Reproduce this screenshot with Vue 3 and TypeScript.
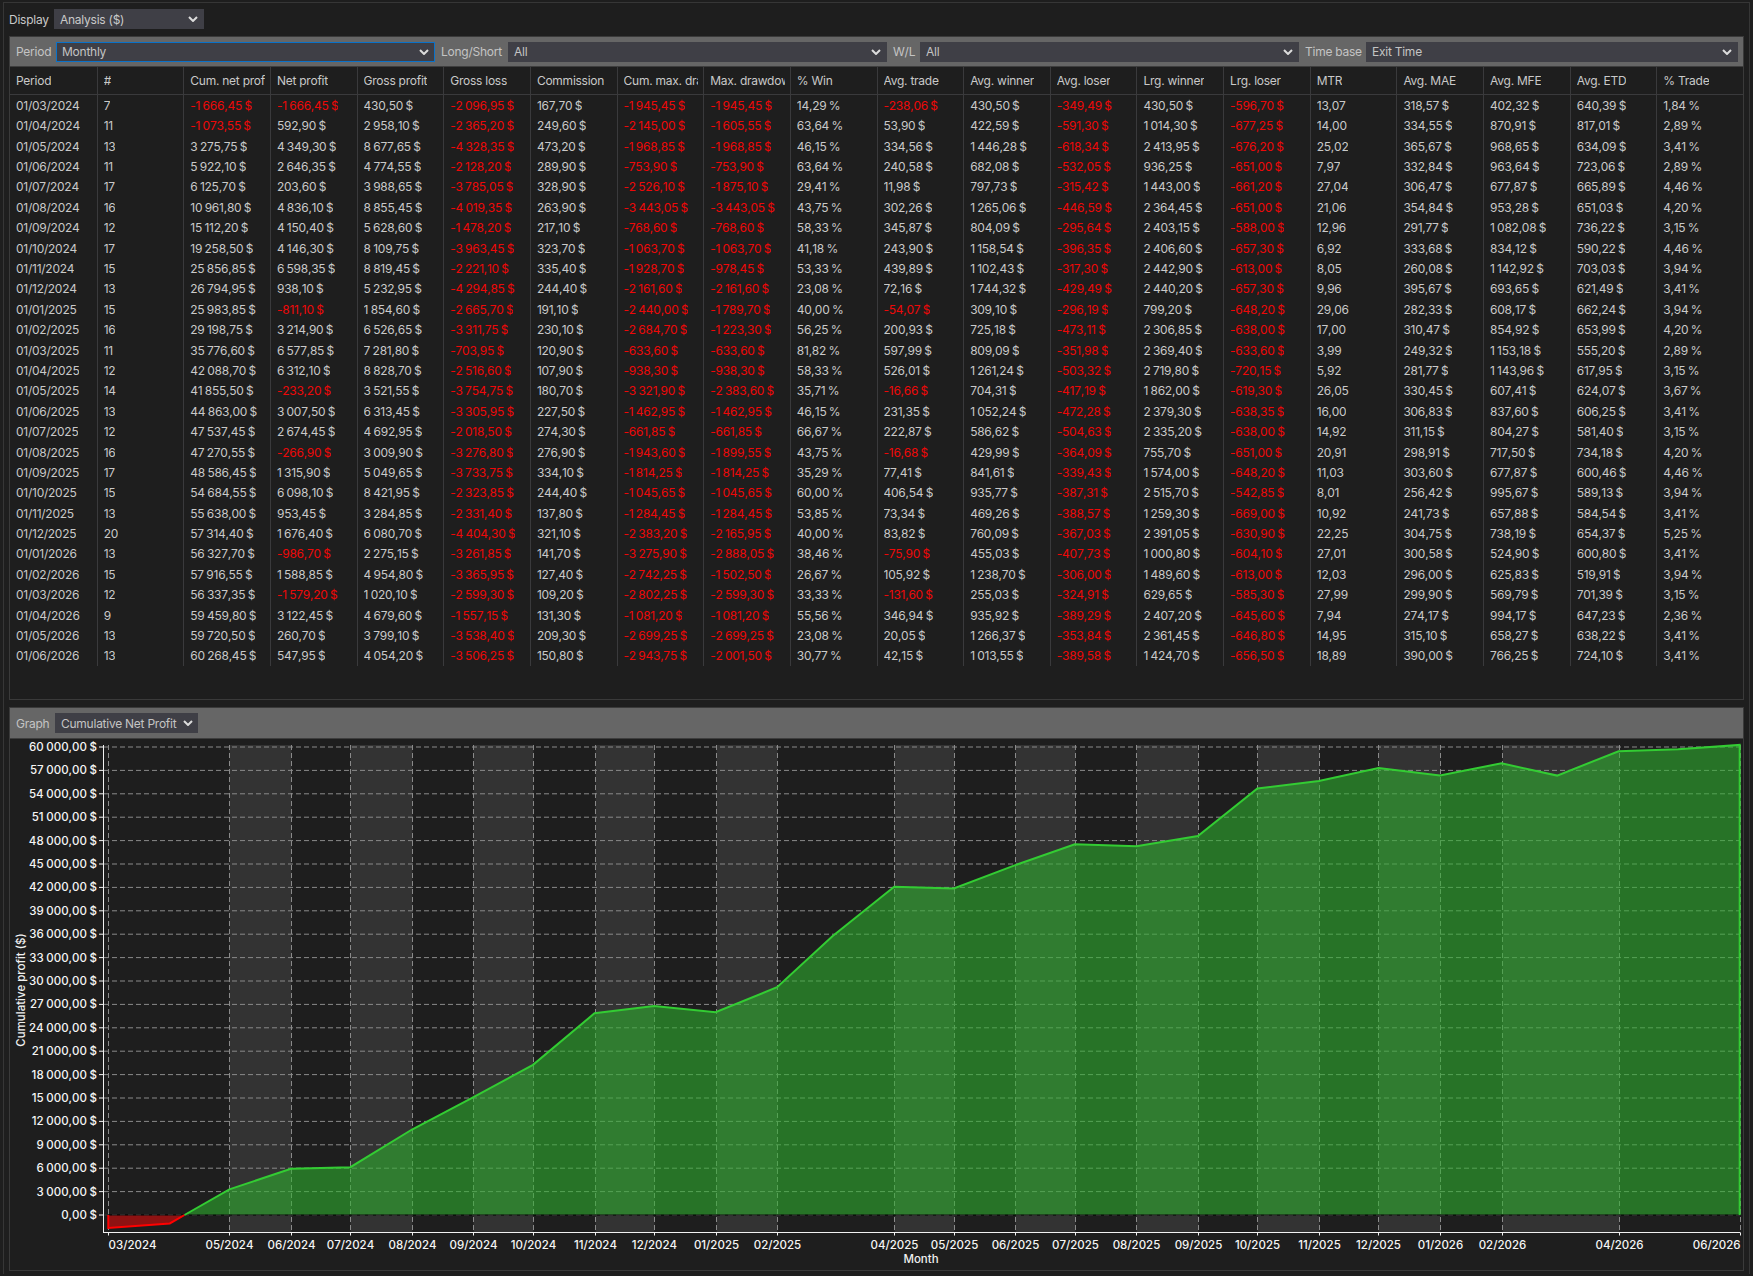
<template>
  <div class="frame">
    <div class="display-row">
      <span class="lbl">Display</span>
      <div class="sel sel-display"><span>Analysis ($)</span><svg class="chev" viewBox="0 0 10 6"><path d="M1 1l4 4 4-4" /></svg></div>
    </div>

    <div class="panel table-panel">
      <div class="bar filters">
        <span class="lbl">Period</span>
        <div class="sel sel-focus"><span>Monthly</span><svg class="chev" viewBox="0 0 10 6"><path d="M1 1l4 4 4-4" /></svg></div>
        <span class="lbl">Long/Short</span>
        <div class="sel"><span>All</span><svg class="chev" viewBox="0 0 10 6"><path d="M1 1l4 4 4-4" /></svg></div>
        <span class="lbl">W/L</span>
        <div class="sel"><span>All</span><svg class="chev" viewBox="0 0 10 6"><path d="M1 1l4 4 4-4" /></svg></div>
        <span class="lbl">Time base</span>
        <div class="sel"><span>Exit Time</span><svg class="chev" viewBox="0 0 10 6"><path d="M1 1l4 4 4-4" /></svg></div>
      </div>

      <div class="grid-row head">
        <div v-for="h in headers" :key="h" class="cell"><span>{{ h }}</span></div>
      </div>
      <div v-for="(r, i) in rows" :key="i" class="grid-row">
        <div v-for="(c, j) in r" :key="j" class="cell" :class="{ neg: c.startsWith('-') }"><span>{{ c }}</span></div>
      </div>
    </div>

    <div class="panel graph-panel">
      <div class="bar graph-bar">
        <span class="lbl">Graph</span>
        <div class="sel sel-graph"><span>Cumulative Net Profit</span><svg class="chev" viewBox="0 0 10 6"><path d="M1 1l4 4 4-4" /></svg></div>
      </div>
      <svg class="chart" viewBox="10 739 1733 531" width="1733" height="531">
        <!-- bandes alternées -->
        <rect v-for="b in bands" :key="b.x" :x="b.x" y="745" :width="b.w" :height="axisY - 745" fill="#333333" />
        <!-- grille -->
        <line v-for="t in yTicks" :key="'h' + t.v" x1="104" :y1="t.y" :x2="plotR" :y2="t.y" class="grid" />
        <line v-for="t in xTicks" :key="'v' + t.label" :x1="t.x" y1="745" :x2="t.x" :y2="axisY" class="grid" />
        <!-- courbe -->
        <path :d="redArea" fill="rgba(235,10,10,0.55)" />
        <path :d="greenArea" fill="rgba(46,179,46,0.57)" />
        <line x1="104" :y1="zeroY" :x2="plotR" :y2="zeroY" stroke="#000" stroke-width="1" />
        <polyline :points="redLine" fill="none" stroke="#ff0000" stroke-width="2" />
        <polyline :points="greenLine" fill="none" stroke="#33cc33" stroke-width="2" />
        <!-- axes -->
        <line x1="103.5" y1="745" x2="103.5" :y2="axisY + 0.5" class="axis" />
        <line x1="103" :y1="axisY" :x2="plotR + 0.5" :y2="axisY" class="axis" />
        <line v-for="t in yTicks" :key="'yt' + t.v" x1="99" :y1="t.y" x2="103" :y2="t.y" class="axis" />
        <line v-for="t in xTicks" :key="'xt' + t.label" :x1="t.x" :y1="axisY" :x2="t.x" :y2="axisY + 3" class="axis" />
        <text v-for="t in yTicks" :key="'yl' + t.v" x="97" :y="t.y + 4" text-anchor="end" class="tick">{{ t.label }}</text>
        <text v-for="t in xTicks" :key="'xl' + t.label" :x="t.x" y="1248.5" :text-anchor="t.anchor" class="tick">{{ t.label }}</text>
        <text x="921" y="1263" text-anchor="middle" class="title">Month</text>
        <text transform="translate(25 990) rotate(-90)" text-anchor="middle" class="title">Cumulative profit ($)</text>
      </svg>
    </div>
  </div>
</template>

<script setup lang="ts">
const headers = ['Period', '#', 'Cum. net profit', 'Net profit', 'Gross profit', 'Gross loss', 'Commission', 'Cum. max. drawdown', 'Max. drawdown', '% Win', 'Avg. trade', 'Avg. winner', 'Avg. loser', 'Lrg. winner', 'Lrg. loser', 'MTR', 'Avg. MAE', 'Avg. MFE', 'Avg. ETD', '% Trade']

const raw = `01/03/2024|7|-1 666,45 $|-1 666,45 $|430,50 $|-2 096,95 $|167,70 $|-1 945,45 $|-1 945,45 $|14,29 %|-238,06 $|430,50 $|-349,49 $|430,50 $|-596,70 $|13,07|318,57 $|402,32 $|640,39 $|1,84 %
01/04/2024|11|-1 073,55 $|592,90 $|2 958,10 $|-2 365,20 $|249,60 $|-2 145,00 $|-1 605,55 $|63,64 %|53,90 $|422,59 $|-591,30 $|1 014,30 $|-677,25 $|14,00|334,55 $|870,91 $|817,01 $|2,89 %
01/05/2024|13|3 275,75 $|4 349,30 $|8 677,65 $|-4 328,35 $|473,20 $|-1 968,85 $|-1 968,85 $|46,15 %|334,56 $|1 446,28 $|-618,34 $|2 413,95 $|-676,20 $|25,02|365,67 $|968,65 $|634,09 $|3,41 %
01/06/2024|11|5 922,10 $|2 646,35 $|4 774,55 $|-2 128,20 $|289,90 $|-753,90 $|-753,90 $|63,64 %|240,58 $|682,08 $|-532,05 $|936,25 $|-651,00 $|7,97|332,84 $|963,64 $|723,06 $|2,89 %
01/07/2024|17|6 125,70 $|203,60 $|3 988,65 $|-3 785,05 $|328,90 $|-2 526,10 $|-1 875,10 $|29,41 %|11,98 $|797,73 $|-315,42 $|1 443,00 $|-661,20 $|27,04|306,47 $|677,87 $|665,89 $|4,46 %
01/08/2024|16|10 961,80 $|4 836,10 $|8 855,45 $|-4 019,35 $|263,90 $|-3 443,05 $|-3 443,05 $|43,75 %|302,26 $|1 265,06 $|-446,59 $|2 364,45 $|-651,00 $|21,06|354,84 $|953,28 $|651,03 $|4,20 %
01/09/2024|12|15 112,20 $|4 150,40 $|5 628,60 $|-1 478,20 $|217,10 $|-768,60 $|-768,60 $|58,33 %|345,87 $|804,09 $|-295,64 $|2 403,15 $|-588,00 $|12,96|291,77 $|1 082,08 $|736,22 $|3,15 %
01/10/2024|17|19 258,50 $|4 146,30 $|8 109,75 $|-3 963,45 $|323,70 $|-1 063,70 $|-1 063,70 $|41,18 %|243,90 $|1 158,54 $|-396,35 $|2 406,60 $|-657,30 $|6,92|333,68 $|834,12 $|590,22 $|4,46 %
01/11/2024|15|25 856,85 $|6 598,35 $|8 819,45 $|-2 221,10 $|335,40 $|-1 928,70 $|-978,45 $|53,33 %|439,89 $|1 102,43 $|-317,30 $|2 442,90 $|-613,00 $|8,05|260,08 $|1 142,92 $|703,03 $|3,94 %
01/12/2024|13|26 794,95 $|938,10 $|5 232,95 $|-4 294,85 $|244,40 $|-2 161,60 $|-2 161,60 $|23,08 %|72,16 $|1 744,32 $|-429,49 $|2 440,20 $|-657,30 $|9,96|395,67 $|693,65 $|621,49 $|3,41 %
01/01/2025|15|25 983,85 $|-811,10 $|1 854,60 $|-2 665,70 $|191,10 $|-2 440,00 $|-1 789,70 $|40,00 %|-54,07 $|309,10 $|-296,19 $|799,20 $|-648,20 $|29,06|282,33 $|608,17 $|662,24 $|3,94 %
01/02/2025|16|29 198,75 $|3 214,90 $|6 526,65 $|-3 311,75 $|230,10 $|-2 684,70 $|-1 223,30 $|56,25 %|200,93 $|725,18 $|-473,11 $|2 306,85 $|-638,00 $|17,00|310,47 $|854,92 $|653,99 $|4,20 %
01/03/2025|11|35 776,60 $|6 577,85 $|7 281,80 $|-703,95 $|120,90 $|-633,60 $|-633,60 $|81,82 %|597,99 $|809,09 $|-351,98 $|2 369,40 $|-633,60 $|3,99|249,32 $|1 153,18 $|555,20 $|2,89 %
01/04/2025|12|42 088,70 $|6 312,10 $|8 828,70 $|-2 516,60 $|107,90 $|-938,30 $|-938,30 $|58,33 %|526,01 $|1 261,24 $|-503,32 $|2 719,80 $|-720,15 $|5,92|281,77 $|1 143,96 $|617,95 $|3,15 %
01/05/2025|14|41 855,50 $|-233,20 $|3 521,55 $|-3 754,75 $|180,70 $|-3 321,90 $|-2 383,60 $|35,71 %|-16,66 $|704,31 $|-417,19 $|1 862,00 $|-619,30 $|26,05|330,45 $|607,41 $|624,07 $|3,67 %
01/06/2025|13|44 863,00 $|3 007,50 $|6 313,45 $|-3 305,95 $|227,50 $|-1 462,95 $|-1 462,95 $|46,15 %|231,35 $|1 052,24 $|-472,28 $|2 379,30 $|-638,35 $|16,00|306,83 $|837,60 $|606,25 $|3,41 %
01/07/2025|12|47 537,45 $|2 674,45 $|4 692,95 $|-2 018,50 $|274,30 $|-661,85 $|-661,85 $|66,67 %|222,87 $|586,62 $|-504,63 $|2 335,20 $|-638,00 $|14,92|311,15 $|804,27 $|581,40 $|3,15 %
01/08/2025|16|47 270,55 $|-266,90 $|3 009,90 $|-3 276,80 $|276,90 $|-1 943,60 $|-1 899,55 $|43,75 %|-16,68 $|429,99 $|-364,09 $|755,70 $|-651,00 $|20,91|298,91 $|717,50 $|734,18 $|4,20 %
01/09/2025|17|48 586,45 $|1 315,90 $|5 049,65 $|-3 733,75 $|334,10 $|-1 814,25 $|-1 814,25 $|35,29 %|77,41 $|841,61 $|-339,43 $|1 574,00 $|-648,20 $|11,03|303,60 $|677,87 $|600,46 $|4,46 %
01/10/2025|15|54 684,55 $|6 098,10 $|8 421,95 $|-2 323,85 $|244,40 $|-1 045,65 $|-1 045,65 $|60,00 %|406,54 $|935,77 $|-387,31 $|2 515,70 $|-542,85 $|8,01|256,42 $|995,67 $|589,13 $|3,94 %
01/11/2025|13|55 638,00 $|953,45 $|3 284,85 $|-2 331,40 $|137,80 $|-1 284,45 $|-1 284,45 $|53,85 %|73,34 $|469,26 $|-388,57 $|1 259,30 $|-669,00 $|10,92|241,73 $|657,88 $|584,54 $|3,41 %
01/12/2025|20|57 314,40 $|1 676,40 $|6 080,70 $|-4 404,30 $|321,10 $|-2 383,20 $|-2 165,95 $|40,00 %|83,82 $|760,09 $|-367,03 $|2 391,05 $|-630,90 $|22,25|304,75 $|738,19 $|654,37 $|5,25 %
01/01/2026|13|56 327,70 $|-986,70 $|2 275,15 $|-3 261,85 $|141,70 $|-3 275,90 $|-2 888,05 $|38,46 %|-75,90 $|455,03 $|-407,73 $|1 000,80 $|-604,10 $|27,01|300,58 $|524,90 $|600,80 $|3,41 %
01/02/2026|15|57 916,55 $|1 588,85 $|4 954,80 $|-3 365,95 $|127,40 $|-2 742,25 $|-1 502,50 $|26,67 %|105,92 $|1 238,70 $|-306,00 $|1 489,60 $|-613,00 $|12,03|296,00 $|625,83 $|519,91 $|3,94 %
01/03/2026|12|56 337,35 $|-1 579,20 $|1 020,10 $|-2 599,30 $|109,20 $|-2 802,25 $|-2 599,30 $|33,33 %|-131,60 $|255,03 $|-324,91 $|629,65 $|-585,30 $|27,99|299,90 $|569,79 $|701,39 $|3,15 %
01/04/2026|9|59 459,80 $|3 122,45 $|4 679,60 $|-1 557,15 $|131,30 $|-1 081,20 $|-1 081,20 $|55,56 %|346,94 $|935,92 $|-389,29 $|2 407,20 $|-645,60 $|7,94|274,17 $|994,17 $|647,23 $|2,36 %
01/05/2026|13|59 720,50 $|260,70 $|3 799,10 $|-3 538,40 $|209,30 $|-2 699,25 $|-2 699,25 $|23,08 %|20,05 $|1 266,37 $|-353,84 $|2 361,45 $|-646,80 $|14,95|315,10 $|658,27 $|638,22 $|3,41 %
01/06/2026|13|60 268,45 $|547,95 $|4 054,20 $|-3 506,25 $|150,80 $|-2 943,75 $|-2 001,50 $|30,77 %|42,15 $|1 013,55 $|-389,58 $|1 424,70 $|-656,50 $|18,89|390,00 $|766,25 $|724,10 $|3,41 %`

const rows = raw.split('\n').map(l => l.split('|'))

const plotL = 108.3
const plotR = 1739.7
const zeroY = 1215
const axisY = 1232.5
const yStep = 23.4

function dayOf(m: number, y: number) {
  return Date.UTC(y, m - 1, 1) / 86400000
}
const day0 = dayOf(3, 2024)
const dayScale = (plotR - plotL) / (dayOf(6, 2026) - day0)
const xOf = (m: number, y: number) => plotL + (dayOf(m, y) - day0) * dayScale
const yOf = (v: number) => zeroY - (v / 3000) * yStep

// points de la courbe, tirés de la colonne Cum. net profit
const pts = rows.map(r => {
  const [, m, y] = r[0].split('/').map(Number)
  const v = parseFloat(r[2].replace(' ', '').replace(',', '.'))
  return { x: xOf(m, y), y: yOf(v), v }
})

const crossT = -pts[1].v / (pts[2].v - pts[1].v)
const crossX = pts[1].x + (pts[2].x - pts[1].x) * crossT
const fmt = (a: { x: number; y: number }) => `${a.x.toFixed(1)},${a.y.toFixed(1)}`

const redLine = `${plotL},${zeroY} ${fmt(pts[0])} ${fmt(pts[1])} ${crossX.toFixed(1)},${zeroY}`
const redArea = `M ${plotL},${zeroY} L ${fmt(pts[0])} L ${fmt(pts[1])} L ${crossX.toFixed(1)},${zeroY} Z`
const greenPts = pts.slice(2).map(fmt).join(' ')
const greenLine = `${crossX.toFixed(1)},${zeroY} ${greenPts} ${plotR},${zeroY}`
const greenArea = `M ${crossX.toFixed(1)},${zeroY} L ${greenPts} L ${plotR},${zeroY} Z`

const yTicks = Array.from({ length: 21 }, (_, i) => {
  const v = i * 3000
  const s = v.toString().replace(/\B(?=(\d{3})+$)/g, ' ')
  return { v, y: zeroY - i * yStep, label: `${s},00 $` }
})

// mois affichés sur l'axe (03/2025, 03/2026 etc. sont sautés comme dans l'original)
const tickMonths: [number, number][] = [
  [3, 2024], [5, 2024], [6, 2024], [7, 2024], [8, 2024], [9, 2024], [10, 2024], [11, 2024], [12, 2024],
  [1, 2025], [2, 2025], [4, 2025], [5, 2025], [6, 2025], [7, 2025], [8, 2025], [9, 2025], [10, 2025], [11, 2025], [12, 2025],
  [1, 2026], [2, 2026], [4, 2026], [6, 2026],
]
const xTicks = tickMonths.map(([m, y], i) => ({
  x: Math.round(xOf(m, y)) + 0.5,
  label: `${String(m).padStart(2, '0')}/${y}`,
  anchor: i === 0 ? 'start' : i === tickMonths.length - 1 ? 'end' : 'middle',
}))

const bands: { x: number; w: number }[] = []
for (let i = 1; i < xTicks.length - 1; i += 2) {
  bands.push({ x: xTicks[i].x, w: xTicks[i + 1].x - xTicks[i].x })
}
</script>

<style scoped>
.frame { box-sizing: border-box; width: 1747px; height: 1272px; margin-left: 3px; border: 1px solid #363636; border-bottom: 0; padding: 6px 5px 0 5px; color: #c9c9c9; font-family: Inter, "Liberation Sans", sans-serif; font-size: 12px; letter-spacing: -0.25px; }
.display-row { display: flex; align-items: center; gap: 6px; height: 20px; margin-bottom: 7px; }
.display-row .lbl { width: 39px; }
.lbl { white-space: nowrap; }
.sel { box-sizing: border-box; height: 20px; background: #3f3f46; display: flex; align-items: center; justify-content: space-between; padding: 0 6px; }
.sel-display { width: 150px; }
.sel-focus { border: 1px solid #0a72c9; padding: 0 5px; }
.sel-graph { width: 143px; padding-right: 5px; }
.chev { width: 10px; height: 6px; flex-shrink: 0; }
.chev path { fill: none; stroke: #dcdcdc; stroke-width: 2; }
.panel { border: 1px solid #3a3a3a; box-sizing: border-box; }
.table-panel { height: 664px; margin-bottom: 7px; }
.graph-panel { height: 564px; }
.bar { background: #666666; color: #c4c4c4; border-bottom: 1px solid #3e3e3e; box-sizing: border-box; }
.filters { height: 30px; display: grid; grid-template-columns: 34px 379px 61px 379px 21px 379px 55px 1fr; align-items: center; column-gap: 6px; padding: 0 5px 0 6px; }
.graph-bar { height: 31px; display: flex; align-items: center; gap: 6px; padding-left: 6px; }
.graph-bar .lbl { width: 33px; }
.grid-row { display: grid; grid-template-columns: repeat(20, 1fr); height: 20.4px; word-spacing: -0.7px; font-kerning: none; }
.head { height: 28.2px; border-bottom: 1px solid #3a3a3c; box-sizing: border-box; word-spacing: 0; font-kerning: auto; }
.cell { padding: 0 5px 0 6px; border-left: 1px solid #3a3a3c; display: flex; align-items: center; min-width: 0; }
.cell:first-child { border-left: 0; padding-left: 6px; }
.cell span { display: block; white-space: nowrap; overflow: hidden; }
.neg { color: #ee0808; }
.chart { display: block; }
.grid { stroke: #8a8a8a; stroke-width: 1; stroke-dasharray: 5 3; }
.axis { stroke: #f2f2f2; stroke-width: 1; }
.tick { fill: #f5f5f5; font-size: 11.5px; font-weight: 500; letter-spacing: 0; word-spacing: -0.4px; font-kerning: none; }
.title { fill: #f0f0f0; font-size: 11.5px; font-weight: 500; letter-spacing: 0; }
</style>

<style>
html, body { margin: 0; background: #1e1e1e; }
#app { padding-top: 2px; }
</style>
